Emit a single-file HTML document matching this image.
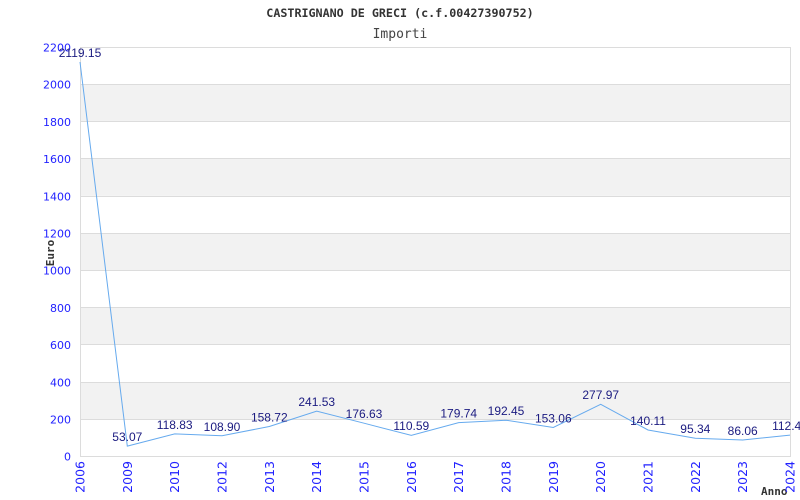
<!DOCTYPE html>
<html><head><meta charset="utf-8"><style>
html,body{margin:0;padding:0;background:#fff;}
svg{display:block;}
</style></head><body>
<svg width="800" height="500" xmlns="http://www.w3.org/2000/svg">
<rect width="800" height="500" fill="#fff"/>
<text x="400" y="17" text-anchor="middle" font-family="DejaVu Sans Mono, Liberation Mono, monospace" font-weight="bold" font-size="11.7" fill="#333">CASTRIGNANO DE GRECI (c.f.00427390752)</text>
<text x="400" y="38" text-anchor="middle" font-family="DejaVu Sans Mono, Liberation Mono, monospace" font-size="13" fill="#444">Importi</text>
<g fill="#f2f2f2">
<rect x="80" y="84.2" width="710" height="37.2"/>
<rect x="80" y="158.6" width="710" height="37.2"/>
<rect x="80" y="233" width="710" height="37.2"/>
<rect x="80" y="307.6" width="710" height="37.2"/>
<rect x="80" y="382" width="710" height="37.2"/>
</g>
<g stroke="#dcdcdc" stroke-width="1">
<line x1="80" x2="790" y1="47.5" y2="47.5"/>
<line x1="80" x2="790" y1="84.5" y2="84.5"/>
<line x1="80" x2="790" y1="121.5" y2="121.5"/>
<line x1="80" x2="790" y1="158.5" y2="158.5"/>
<line x1="80" x2="790" y1="196.5" y2="196.5"/>
<line x1="80" x2="790" y1="233.5" y2="233.5"/>
<line x1="80" x2="790" y1="270.5" y2="270.5"/>
<line x1="80" x2="790" y1="307.5" y2="307.5"/>
<line x1="80" x2="790" y1="344.5" y2="344.5"/>
<line x1="80" x2="790" y1="382.5" y2="382.5"/>
<line x1="80" x2="790" y1="419.5" y2="419.5"/>
<line x1="80" x2="790" y1="456.5" y2="456.5"/>
<line x1="80.5" x2="80.5" y1="47" y2="457"/>
<line x1="790.5" x2="790.5" y1="47" y2="457"/>
</g>
<g font-family="DejaVu Sans, sans-serif" font-size="11" fill="#2222ff" text-anchor="end">
<text x="71" y="51.5">2200</text>
<text x="71" y="88.7">2000</text>
<text x="71" y="125.9">1800</text>
<text x="71" y="163">1600</text>
<text x="71" y="200.3">1400</text>
<text x="71" y="237.5">1200</text>
<text x="71" y="274.7">1000</text>
<text x="71" y="311.9">800</text>
<text x="71" y="349">600</text>
<text x="71" y="386.3">400</text>
<text x="71" y="423.5">200</text>
<text x="71" y="460.7">0</text>
</g>
<text transform="translate(54,253) rotate(-90)" text-anchor="middle" font-family="DejaVu Sans Mono, monospace" font-weight="bold" font-size="11" fill="#333">Euro</text>
<text x="761" y="495" font-family="DejaVu Sans Mono, monospace" font-weight="bold" font-size="11" fill="#333">Anno</text>
<polyline fill="none" stroke="#66aaee" stroke-width="1" points="80,62 127.3,446.1 174.7,433.9 222,435.8 269.3,426.5 316.7,411.1 364,423.2 411.3,435.4 458.7,422.6 506,420.2 553.3,427.5 600.7,404.3 648,430 695.3,438.3 742.7,440 790,435.1"/>
<g font-family="Liberation Sans, Arial, sans-serif" font-size="12" fill="#1a1a80" text-anchor="middle">
<text x="80" y="57">2119.15</text>
<text x="127.3" y="441">53.07</text>
<text x="174.7" y="429">118.83</text>
<text x="222" y="431">108.90</text>
<text x="269.3" y="421.5">158.72</text>
<text x="316.7" y="406">241.53</text>
<text x="364" y="418">176.63</text>
<text x="411.3" y="430">110.59</text>
<text x="458.7" y="417.5">179.74</text>
<text x="506" y="415">192.45</text>
<text x="553.3" y="422.5">153.06</text>
<text x="600.7" y="399">277.97</text>
<text x="648" y="425">140.11</text>
<text x="695.3" y="433">95.34</text>
<text x="742.7" y="435">86.06</text>
<text x="790" y="430">112.47</text>
</g>
<g font-family="DejaVu Sans, sans-serif" font-size="12.5" fill="#2222ff" text-anchor="end">
<text transform="translate(84.5,461) rotate(-90)">2006</text>
<text transform="translate(131.8,461) rotate(-90)">2009</text>
<text transform="translate(179.2,461) rotate(-90)">2010</text>
<text transform="translate(226.5,461) rotate(-90)">2012</text>
<text transform="translate(273.8,461) rotate(-90)">2013</text>
<text transform="translate(321.2,461) rotate(-90)">2014</text>
<text transform="translate(368.5,461) rotate(-90)">2015</text>
<text transform="translate(415.8,461) rotate(-90)">2016</text>
<text transform="translate(463.2,461) rotate(-90)">2017</text>
<text transform="translate(510.5,461) rotate(-90)">2018</text>
<text transform="translate(557.8,461) rotate(-90)">2019</text>
<text transform="translate(605.2,461) rotate(-90)">2020</text>
<text transform="translate(652.5,461) rotate(-90)">2021</text>
<text transform="translate(699.8,461) rotate(-90)">2022</text>
<text transform="translate(747.2,461) rotate(-90)">2023</text>
<text transform="translate(794.5,461) rotate(-90)">2024</text>
</g>
</svg>
</body></html>
